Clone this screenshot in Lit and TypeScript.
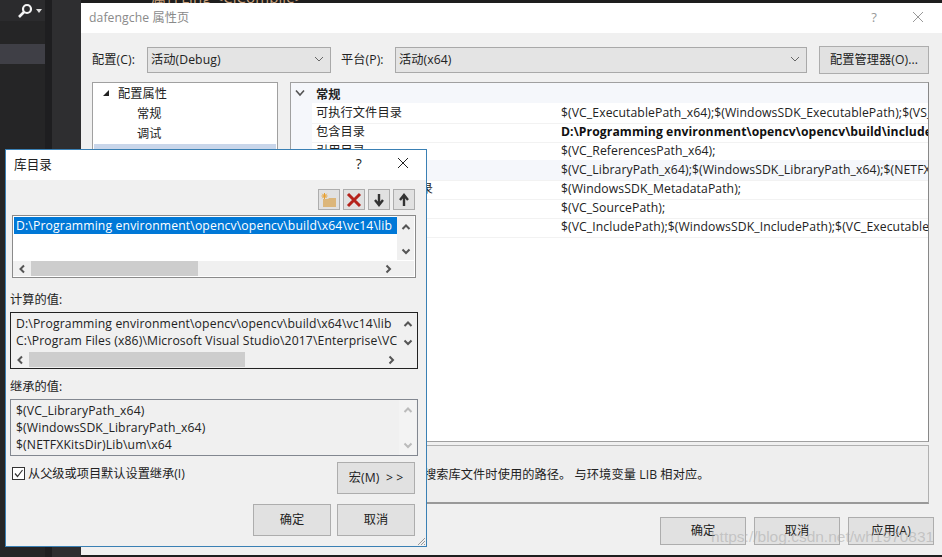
import { LitElement, html, css } from "lit";
import { customElement } from "lit/decorators.js";

const chev = (d: "u" | "d" | "l" | "r", color = "#555") => {
  const p = { u: "M1.5 7 5 3.5 8.5 7", d: "M1.5 3.5 5 7 8.5 3.5", l: "M7 1.5 3.5 5 7 8.5", r: "M3.5 1.5 7 5 3.5 8.5" }[d];
  return html`<svg class="chev" width="10" height="10" viewBox="0 0 10 10"><path d=${p} fill="none" stroke=${color} stroke-width="2"/></svg>`;
};
const selectChev = html`<svg width="10" height="6" viewBox="0 0 10 6"><path d="M1 1 5 5 9 1" fill="none" stroke="#666" stroke-width="1"/></svg>`;

const rows: [string, string, boolean?, boolean?][] = [
  ["可执行文件目录", "$(VC_ExecutablePath_x64);$(WindowsSDK_ExecutablePath);$(VS_ExecutablePath);$(MSBuild_ExecutablePath)"],
  ["包含目录", "D:\\Programming environment\\opencv\\opencv\\build\\include;$(VC_IncludePath)", true],
  ["引用目录", "$(VC_ReferencesPath_x64);"],
  ["库目录", "$(VC_LibraryPath_x64);$(WindowsSDK_LibraryPath_x64);$(NETFXKitsDir)Lib\\um\\x64", false, true],
  ["Windows 运行库目录", "$(WindowsSDK_MetadataPath);"],
  ["源目录", "$(VC_SourcePath);"],
  ["排除目录", "$(VC_IncludePath);$(WindowsSDK_IncludePath);$(VC_ExecutablePath_x64);$(VC_LibraryPath_x64)"],
];

@customElement("app-root")
export class AppRoot extends LitElement {
  static styles = css`
    :host { display: block; position: relative; width: 942px; height: 557px; overflow: hidden; background: #242426;
      font-family: "Open Sans", "Noto Sans CJK SC", sans-serif; font-size: 12.2px; letter-spacing: .09px; color: #222; }
    * { box-sizing: border-box; }
    .backdrop { display: flex; height: 557px; }
    .side { width: 45px; display: flex; flex-direction: column; background: #252526; }
    .searchbar { height: 21px; background: #2b2b2d; display: flex; align-items: center; padding-left: 17px; gap: 3px; }
    .gap1 { height: 23px; }
    .hl { height: 20px; background: #3f3f46; }
    .rail { width: 7px; background: #1e1e20; }
    .rail2 { width: 29px; background: #2e2e30; }
    .editor { flex: 1; background: #1e1e1e; overflow: hidden; }
    .code { margin: -14px 0 0 70px; color: #c9a27e; font-size: 15px; white-space: nowrap; }

    .win { position: absolute; display: flex; flex-direction: column; background: #f0f0f0; }
    .back { left: 81px; top: 3px; width: 861px; height: 552px; }
    .titlebar { background: #fff; display: flex; align-items: center; flex: none; }
    .back .titlebar { height: 30px; padding: 0 18px 2px 8px; color: #8a8a8a; }
    .grow { flex: 1; }
    .back .q { color: #999; margin-right: 35px; font-size: 13px; }
    .back-body { flex: 1; display: flex; flex-direction: column; padding: 13px 13px 0 11px; }
    .cfg { display: flex; align-items: center; height: 28px; }
    .cfg .lab { white-space: nowrap; padding-bottom: 2px; }
    .lab1 { width: 55px; }
    .lab2 { width: 54px; margin-left: 10px; }
    .select { height: 26px; background: #e4e4e4; border: 1px solid #a9a9a9; display: flex; align-items: center;
      justify-content: space-between; padding: 0 6px 2px 3px; }
    .s1 { width: 184px; }
    .s2 { width: 412px; }
    .btn { background: #e1e1e1; border: 1px solid #adadad; display: flex; align-items: center; justify-content: center; flex: none; white-space: nowrap; padding-bottom: 2px; }
    .cfgbtn { width: 110px; height: 28px; margin-left: 12px; }
    .main { display: flex; gap: 12px; margin-top: 8px; height: 360px; }
    .tree { width: 186px; background: #fff; border: 1px solid #a0a0a0; padding: 1px; }
    .tree-row { height: 20px; display: flex; align-items: center; padding-bottom: 2px; }
    .t0 { padding-left: 9px; gap: 9px; }
    .t1 { padding-left: 43px; }
    .tree-row.sel { background: #c9d6ea; padding: 0 0 0 45px; }
    .tri { width: 0; height: 0; border-left: 6px solid transparent; border-bottom: 6px solid #222; }
    .grid { flex: 1; background: #fff; border: 1px solid #a0a0a0; border-right-color: #888; display: flex; flex-direction: column; overflow: hidden; }
    .ghead { height: 20px; flex: none; background: #f5f7fb; display: flex; align-items: center; padding-left: 4px; font-weight: 700; }
    .ghead svg { margin-right: 11px; }
    .ghead span { padding-top: 2px; }
    .grow-row { display: grid; grid-template-columns: 21px 249px 1fr; height: 19px; align-items: center; }
    .gut { background: #f5f7fb; height: 100%; }
    .rl { height: 100%; padding: 0 0 2px 4px; display: flex; align-items: center; border-bottom: 1px solid #f2f2f2; white-space: nowrap; }
    .rv { height: 100%; padding-bottom: 2px; display: flex; align-items: center; white-space: nowrap; overflow: hidden; border-bottom: 1px solid #f2f2f2; }
    .hi .rl, .hi .rv { background: #f5f7fb; }
    .b { font-weight: 700; color: #111; }
    .desc { margin-top: 3px; height: 59px; background: #eee; border: 1px solid #b0b0b0; border-bottom: 2px solid #999;
      display: flex; align-items: center; padding: 0 0 0 197px; white-space: pre; }
    .foot { display: flex; justify-content: flex-end; gap: 8px; margin: 13px -5px 0 0; }
    .foot .btn { width: 86px; height: 28px; }
    .mark { position: absolute; left: 711px; top: 528px; font-family: "Liberation Sans", sans-serif; font-size: 15.5px; letter-spacing: 0;
      color: rgba(170,170,170,.55); white-space: nowrap; }

    .dlg { left: 5px; top: 149px; width: 422px; height: 398px; border: 1px solid #3a80b4; }
    .dlg .titlebar { height: 30px; padding: 0 17px 4px 8px; color: #222; font-size: 12.6px; }
    .dlg .q { margin-right: 35px; font-size: 14px; }
    .dlg-body { flex: 1; display: flex; flex-direction: column; padding: 9px 8px 0 4px; }
    .tools { display: flex; justify-content: flex-end; gap: 3px; padding-right: 3px; }
    .tool { width: 22px; height: 21px; padding-bottom: 0; }
    .list { flex: none; position: relative; overflow: hidden; white-space: nowrap; }
    .l1 { margin: 5px 2px 0; height: 63px; border: 1px solid #8a8a8a; background: #fff; }
    .selrow { position: absolute; left: 1px; top: 1px; width: 383px; height: 17px; background: #0078d7; color: #fff; padding-left: 2px; line-height: 17px; letter-spacing: .14px; }
    .hbar { position: absolute; left: 0; right: 1px; bottom: 1px; height: 15px; background: #f0f0f0; }
    .thumb { position: absolute; top: 0; height: 15px; background: #cdcdcd; }
    .vbar { position: absolute; right: 1px; top: 0; width: 17px; background: #f0f0f0; display: flex; flex-direction: column; justify-content: space-between; align-items: center; }
    .lbl { display: flex; align-items: flex-end; white-space: nowrap; }
    .lb1 { height: 34px; padding-bottom: 4px; }
    .lb2 { height: 30px; padding-bottom: 4px; }
    .l2, .l3 { height: 57px; padding: 2px 0 0 5px; line-height: 17px; }
    .l2 { border: 1px solid #222; }
    .l3 { border: 1px solid #828790; }
    .clip { width: 381px; overflow: hidden; letter-spacing: .13px; }
    .opt { display: flex; justify-content: space-between; margin-top: 6px; padding: 0 3px 0 2px; }
    .check { display: flex; align-items: center; gap: 3px; height: 13px; margin-top: 5px; white-space: nowrap; letter-spacing: 0; }
    .check span:last-child { padding-bottom: 2px; }
    .box { width: 13px; height: 13px; border: 1px solid #333; background: #fff; display: flex; }
    .macro { width: 78px; height: 32px; white-space: pre; }
    .oks { display: flex; justify-content: flex-end; gap: 6px; margin-top: 10px; padding-right: 3px; }
    .oks .btn { width: 78px; height: 32px; }
    .grip { position: absolute; right: 0; bottom: 0; }
  `;

  render() {
    return html`
      <div class="backdrop">
        <div class="side">
          <div class="searchbar">
            <svg width="16" height="16" viewBox="0 0 16 16"><circle cx="10" cy="6" r="4" fill="none" stroke="#f4f4f4" stroke-width="2.2"/><path d="M7 9 2 14" stroke="#f4f4f4" stroke-width="2.6"/></svg>
            <svg width="6" height="4" viewBox="0 0 6 4"><path d="M0 0h6L3 4z" fill="#ddd"/></svg>
          </div>
          <div class="gap1"></div>
          <div class="hl"></div>
        </div>
        <div class="rail"></div>
        <div class="rail2"></div>
        <div class="editor"><div class="code">属性Ling &lt;ClCompile&gt;</div></div>
      </div>

      <div class="win back">
        <div class="titlebar">
          <span>dafengche 属性页</span><span class="grow"></span><span class="q">?</span>
          <svg width="12" height="12" viewBox="0 0 12 12"><path d="M1 1 11 11M11 1 1 11" stroke="#999" stroke-width="1"/></svg>
        </div>
        <div class="back-body">
          <div class="cfg">
            <span class="lab lab1">配置(C):</span>
            <div class="select s1"><span>活动(Debug)</span>${selectChev}</div>
            <span class="lab lab2">平台(P):</span>
            <div class="select s2"><span>活动(x64)</span>${selectChev}</div>
            <div class="btn cfgbtn">配置管理器(O)...</div>
          </div>
          <div class="main">
            <div class="tree">
              <div class="tree-row t0"><span class="tri"></span><span>配置属性</span></div>
              <div class="tree-row t1">常规</div>
              <div class="tree-row t1">调试</div>
              <div class="tree-row t1 sel">VC++ 目录</div>
            </div>
            <div class="grid">
              <div class="ghead">
                <svg width="10" height="8" viewBox="0 0 10 8"><path d="M1 1.5 5 6 9 1.5" fill="none" stroke="#555" stroke-width="1.6"/></svg>
                <span>常规</span>
              </div>
              ${rows.map(([l, v, bold, hi]) => html`
                <div class="grow-row ${hi ? "hi" : ""}">
                  <div class="gut"></div>
                  <div class="rl">${l}</div>
                  <div class="rv ${bold ? "b" : ""}">${v}</div>
                </div>`)}
            </div>
          </div>
          <div class="desc">在生成 VC++ 项目期间，搜索库文件时使用的路径。 与环境变量 LIB 相对应。</div>
          <div class="foot">
            <div class="btn">确定</div><div class="btn">取消</div><div class="btn">应用(A)</div>
          </div>
        </div>
      </div>

      <div class="win dlg">
        <div class="titlebar">
          <span>库目录</span><span class="grow"></span><span class="q">?</span>
          <svg width="12" height="12" viewBox="0 0 12 12"><path d="M1 1 11 11M11 1 1 11" stroke="#222" stroke-width="1"/></svg>
        </div>
        <div class="dlg-body">
          <div class="tools">
            <div class="btn tool"><svg width="18" height="16" viewBox="0 0 18 16">
              <path d="M3 7h5l1-1h7v9H3z" fill="#dcb67a"/>
              <path d="M4.500 1v6M1.500 4h6M2.300 1.800l4.400 4.400M6.700 1.800 2.300 6.200" stroke="#e8a030" stroke-width="1"/>
            </svg></div>
            <div class="btn tool"><svg width="16" height="16" viewBox="0 0 16 16"><path d="M2 2 14 14M14 2 2 14" stroke="#b5231c" stroke-width="3"/></svg></div>
            <div class="btn tool"><svg width="12" height="14" viewBox="0 0 12 14"><path d="M6 1v10M2 7l4 5 4-5" fill="none" stroke="#333" stroke-width="2.400"/></svg></div>
            <div class="btn tool"><svg width="12" height="14" viewBox="0 0 12 14"><path d="M6 13V3M2 7l4-5 4 5" fill="none" stroke="#333" stroke-width="2.400"/></svg></div>
          </div>
          <div class="list l1">
            <div class="selrow">D:\\Programming environment\\opencv\\opencv\\build\\x64\\vc14\\lib</div>
            <div class="vbar" style="height:44px;padding:6px 0 4px">${chev("u")}${chev("d")}</div>
            <div class="hbar">
              ${this.hChev("l", 4)}
              <div class="thumb" style="left:18px;width:167px"></div>
              ${this.hChev("r", 370)}
            </div>
          </div>
          <div class="lbl lb1">计算的值:</div>
          <div class="list l2">
            <div class="clip">D:\\Programming environment\\opencv\\opencv\\build\\x64\\vc14\\lib</div>
            <div class="clip">C:\\Program Files (x86)\\Microsoft Visual Studio\\2017\\Enterprise\\VC\\Tools</div>
            <div class="vbar" style="height:38px;padding:6px 0 0;gap:8px;justify-content:flex-start">${chev("u")}${chev("d")}</div>
            <div class="hbar">
              ${this.hChev("l", 4)}
              <div class="thumb" style="left:18px;width:216px"></div>
              ${this.hChev("r", 375)}
            </div>
          </div>
          <div class="lbl lb2">继承的值:</div>
          <div class="list l3">
            <div class="clip">$(VC_LibraryPath_x64)</div>
            <div class="clip">$(WindowsSDK_LibraryPath_x64)</div>
            <div class="clip">$(NETFXKitsDir)Lib\\um\\x64</div>
            <div class="vbar" style="height:55px;padding:5px 0;background:#f3f3f3">${chev("u", "#bbb")}${chev("d", "#bbb")}</div>
          </div>
          <div class="opt">
            <div class="check">
              <span class="box"><svg width="11" height="11" viewBox="0 0 11 11"><path d="M2 5.500 4.500 8.500 9.500 2" fill="none" stroke="#333" stroke-width="1.200"/></svg></span>
              <span>从父级或项目默认设置继承(I)</span>
            </div>
            <div class="btn macro">宏(M)  &gt; &gt;</div>
          </div>
          <div class="oks"><div class="btn">确定</div><div class="btn">取消</div></div>
        </div>
        <svg class="grip" width="10" height="10" viewBox="0 0 10 10"><path d="M9 2 2 9M9 5 5 9M9 8 8 9" stroke="#999" stroke-width="1"/></svg>
      </div>

      <div class="mark">https://blog.csdn.net/wh1970831</div>
    `;
  }

  hChev(d: "l" | "r", x: number) {
    return html`<span style="position:absolute;top:0;left:${x}px;height:15px;display:flex;align-items:center">${chev(d)}</span>`;
  }
}
